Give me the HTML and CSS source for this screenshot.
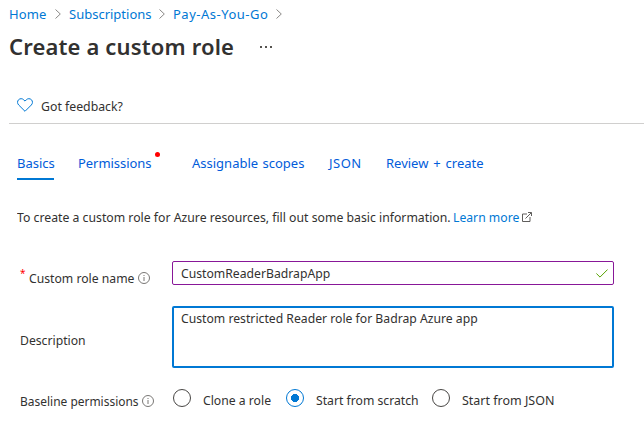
FILE: index.html
```html
<!DOCTYPE html>
<html lang="en">
<head>
<meta charset="utf-8">
<title>Create a custom role</title>
<link rel="stylesheet" href="styles.css">
</head>
<body>
<nav class="crumbs">
  <a class="crumb home">Home</a>
  <svg class="chevron" viewBox="0 0 6 10"><path d="M.5 .5 5.3 5 .5 9.5"/></svg>
  <a class="crumb subs">Subscriptions</a>
  <svg class="chevron" viewBox="0 0 6 10"><path d="M.5 .5 5.3 5 .5 9.5"/></svg>
  <a class="crumb payg">Pay-As-You-Go</a>
  <svg class="chevron" viewBox="0 0 6 10"><path d="M.5 .5 5.3 5 .5 9.5"/></svg>
</nav>
<header class="heading">
  <h1>Create a custom role</h1>
  <svg class="more" viewBox="0 0 12 2"><path d="M0 0h2v2H0zM5 0h2v2H5zM10 0h2v2h-2z"/></svg>
</header>
<div class="toolbar">
  <svg class="heart" viewBox="0 0 16 14"><path d="M8 13.3 1.7 7C.2 5.500.2 3.200 1.500 1.800 3 .3 5.300.3 6.700 1.800L8 3.100l1.300-1.300c1.400-1.500 3.700-1.500 5.200 0 1.300 1.400 1.300 3.700-.2 5.200z"/></svg>
  <span class="narrow feedback">Got feedback?</span>
</div>
<nav class="tabs">
  <a class="tab basics">Basics</a>
  <a class="tab perms">Permissions<i class="dot"></i></a>
  <a class="tab scopes">Assignable scopes</a>
  <a class="tab json">JSON</a>
  <a class="tab review">Review + create</a>
</nav>
<p class="intro"><span class="intro-text"><span class="narrow">To create a custom role for Azure resources, fill out some basic information.</span></span>
  <a class="learn"><span class="narrow">Learn more</span></a>
  <svg class="external" viewBox="0 0 10 10"><path d="M5 2H.5v7.500H8V5M3.500 6.500 9.300.7M6 .5h3.500V4"/></svg>
</p>
<form class="form">
  <div class="row name-row">
    <div class="label"><b class="star">*</b><span class="name-label"><span class="narrow">Custom role name</span></span>
      <svg class="info" viewBox="0 0 12 12"><circle cx="6" cy="6" r="5.500"/><path d="M6 5v4M6 3v1"/></svg></div>
    <div class="input"><span class="narrow">CustomReaderBadrapApp</span>
      <svg class="check" viewBox="0 0 12 9"><path d="M.4 4.500 4 8.100 11.600.5"/></svg></div>
  </div>
  <div class="row desc-row">
    <div class="label"><span class="narrow">Description</span></div>
    <div class="textarea"><span class="narrow">Custom restricted Reader role for Badrap Azure app</span></div>
  </div>
  <div class="row base-row">
    <div class="label"><span class="base-label"><span class="narrow">Baseline permissions</span></span>
      <svg class="info" viewBox="0 0 12 12"><circle cx="6" cy="6" r="5.500"/><path d="M6 5v4M6 3v1"/></svg></div>
    <div class="option clone"><i class="radio"></i><span class="narrow">Clone a role</span></div>
    <div class="option scratch"><i class="radio on"></i><span class="narrow">Start from scratch</span></div>
    <div class="option from-json"><i class="radio"></i><span class="narrow">Start from JSON</span></div>
  </div>
</form>
</body>
</html>
```

FILE: styles.css
```css
* { box-sizing: border-box; }
body {
  margin: 0;
  width: 644px;
  height: 433px;
  overflow: hidden;
  background: #fff;
  color: #323130;
  font: 13px/18px "Noto Sans", "Open Sans", sans-serif;
  white-space: nowrap;
}
svg { display: block; flex: none; fill: none; }
a { color: #0078d4; }
.narrow { display: inline-block; flex: none; transform: scaleX(.938); transform-origin: 0 50%; }
.crumbs { display: flex; align-items: center; height: 28px; padding-left: 9px; }
.crumb { flex: none; }
.home { width: 46px; letter-spacing: .1px; }
.subs { width: 90px; }
.payg { width: 103px; letter-spacing: .5px; }
.chevron { width: 6px; height: 10px; stroke: #8a8886; margin-right: 8px; }
.heading { display: flex; align-items: center; height: 38px; padding-left: 9px; }
h1 { margin: -2px 0 0; width: 251px; font-size: 22px; line-height: 30px; font-weight: 600; letter-spacing: .15px; color: #323130; }
.more { width: 12px; height: 2px; fill: #55534f; }
.toolbar { display: flex; align-items: center; height: 58px; margin-left: 9px; padding: 23px 0 0 8px; border-bottom: 1px solid #d0cfce; }
.feedback { transform: scaleX(.945); }
.heart { width: 16px; height: 14px; margin: -2px 8px 0 0; stroke: #0078d4; }
.tabs { display: flex; height: 56px; margin-left: 17px; padding-top: 30px; }
.tab { height: 26px; flex: none; color: #015cda; }
.basics { width: 37px; margin-right: 24px; border-bottom: 2px solid #0078d4; }
.perms { position: relative; width: 114px; letter-spacing: -.05px; }
.dot { position: absolute; left: 77px; top: -2px; width: 5px; height: 5px; border-radius: 50%; background: #f00; }
.scopes { width: 137px; word-spacing: 1px; }
.json { width: 57px; letter-spacing: .5px; }
.review { word-spacing: 1.5px; }
.intro { display: flex; align-items: center; height: 18px; margin: 28px 0 0 17px; }
.intro-text { width: 436px; }
.intro-text .narrow { transform: scaleX(.942); }
.learn { width: 69px; }
.external { width: 10px; height: 10px; stroke: #605e5c; }
.form { margin: 35px 0 0; padding-left: 20px; }
.row { display: flex; }
.label { display: flex; align-items: center; flex: none; width: 152px; }
.name-row { height: 24px; }
.name-row .label { height: 34px; }
.star { width: 9px; margin-top: -11px; font-size: 10px; color: #f00; font-weight: 400; }
.name-label { width: 109px; }
.info { width: 12px; height: 12px; stroke: #797775; }
.input { display: flex; align-items: center; justify-content: space-between; width: 442px; height: 24px; padding: 0 5px 0 8px; border: 1px solid #881798; border-radius: 2px; }
.check { width: 12px; height: 9px; stroke: #57a300; stroke-width: 1; }
.desc-row { margin-top: 21px; height: 62px; }
.desc-row .label { padding-top: 6px; }
.textarea { width: 442px; height: 62px; padding: 1px 7px; border: 2px solid #0078d4; border-radius: 2px; }
.base-row { height: 24px; margin-top: 19px; align-items: center; }
.base-row .label { padding-top: 4px; width: 153px; }
.base-label { width: 122px; }
.base-label .narrow { transform: scaleX(.92); }
.option { display: flex; align-items: center; flex: none; }
.option .narrow { padding-top: 2px; }
.clone { width: 113px; }
.scratch { width: 146px; }
.from-json .narrow { transform: scaleX(.96); }
.radio { flex: none; width: 18px; height: 18px; margin: -2px 12px 0 0; border: 1px solid #484644; border-radius: 50%; }
.radio.on { border-color: #0078d4; background: radial-gradient(circle, #0078d4 3.800px, transparent 4.300px); }
```
